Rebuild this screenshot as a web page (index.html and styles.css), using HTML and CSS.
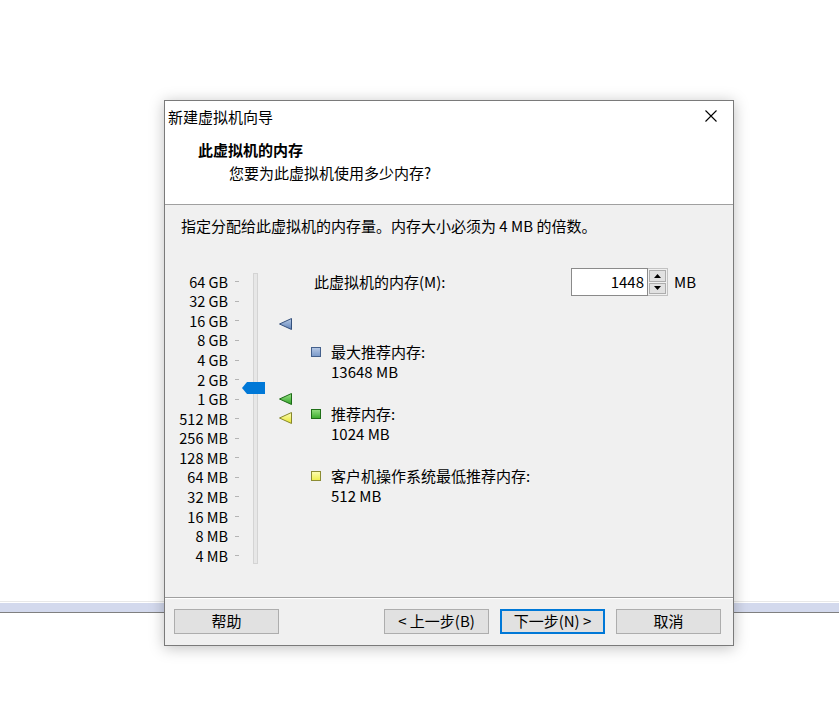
FILE: index.html
```html
<!DOCTYPE html>
<html>
<head>
  <title>新建虚拟机向导</title>
  <link rel="stylesheet" href="styles.css">
</head>
<body>
  <div class="wizard">
    <div class="titlebar">
      <span class="title">新建虚拟机向导</span>
      <svg class="close" width="12" height="12" viewBox="0 0 12 12">
        <path d="M0.5 0.5 L11.5 11.5 M11.5 0.5 L0.5 11.5" stroke="#000" stroke-width="1.1" fill="none"/>
      </svg>
    </div>

    <div class="header">
      <h1>此虚拟机的内存</h1>
      <p>您要为此虚拟机使用多少内存?</p>
    </div>

    <div class="content">
      <p class="hint">指定分配给此虚拟机的内存量。内存大小必须为 4 MB 的倍数。</p>

      <div class="main">
        <div class="scale">
          <div class="ticks">
            <div class="tick"><span>64 GB</span><i></i></div>
            <div class="tick"><span>32 GB</span><i></i></div>
            <div class="tick"><span>16 GB</span><i></i></div>
            <div class="tick"><span>8 GB</span><i></i></div>
            <div class="tick"><span>4 GB</span><i></i></div>
            <div class="tick"><span>2 GB</span><i></i></div>
            <div class="tick"><span>1 GB</span><i></i></div>
            <div class="tick"><span>512 MB</span><i></i></div>
            <div class="tick"><span>256 MB</span><i></i></div>
            <div class="tick"><span>128 MB</span><i></i></div>
            <div class="tick"><span>64 MB</span><i></i></div>
            <div class="tick"><span>32 MB</span><i></i></div>
            <div class="tick"><span>16 MB</span><i></i></div>
            <div class="tick"><span>8 MB</span><i></i></div>
            <div class="tick"><span>4 MB</span><i></i></div>
          </div>
          <div class="track"></div>

          <svg class="thumb" width="23" height="12" viewBox="0 0 23 12">
            <polygon points="0,6 5,0 23,0 23,12 5,12" fill="#0078d7"/>
          </svg>

          <svg class="marker max" width="13" height="12" viewBox="0 0 13 12">
            <defs>
              <linearGradient id="gb" x1="0" y1="0" x2="0" y2="1">
                <stop offset="0" stop-color="#b8cbe6"/>
                <stop offset="1" stop-color="#5f82b8"/>
              </linearGradient>
            </defs>
            <polygon points="0.5,6 12.5,0.5 12.5,11.5" fill="url(#gb)" stroke="#34507c" stroke-width="1"/>
          </svg>
          <svg class="marker rec" width="13" height="12" viewBox="0 0 13 12">
            <defs>
              <linearGradient id="gg" x1="0" y1="0" x2="0" y2="1">
                <stop offset="0" stop-color="#9be28a"/>
                <stop offset="1" stop-color="#2fa424"/>
              </linearGradient>
            </defs>
            <polygon points="0.5,6 12.5,0.5 12.5,11.5" fill="url(#gg)" stroke="#1c6a16" stroke-width="1"/>
          </svg>
          <svg class="marker min" width="13" height="12" viewBox="0 0 13 12">
            <defs>
              <linearGradient id="gy" x1="0" y1="0" x2="0" y2="1">
                <stop offset="0" stop-color="#fdfdb8"/>
                <stop offset="1" stop-color="#e6e62c"/>
              </linearGradient>
            </defs>
            <polygon points="0.5,6 12.5,0.5 12.5,11.5" fill="url(#gy)" stroke="#86862c" stroke-width="1"/>
          </svg>
        </div>

        <div class="info">
          <div class="memrow">
            <label class="memlabel">此虚拟机的内存(M):</label>
            <div class="spinbox">
              <div class="field">1448</div>
              <div class="spin">
                <div class="up"><svg width="7" height="4" viewBox="0 0 7 4"><polygon points="3.5,0 7,4 0,4" fill="#000"/></svg></div>
                <div class="down"><svg width="7" height="4" viewBox="0 0 7 4"><polygon points="0,0 7,0 3.5,4" fill="#000"/></svg></div>
              </div>
            </div>
            <span class="unit">MB</span>
          </div>

          <div class="legend">
            <div class="item">
              <span class="swatch blue"></span>
              <div>
                <div>最大推荐内存:</div>
                <div>13648 MB</div>
              </div>
            </div>
            <div class="item">
              <span class="swatch green"></span>
              <div>
                <div>推荐内存:</div>
                <div>1024 MB</div>
              </div>
            </div>
            <div class="item">
              <span class="swatch yellow"></span>
              <div>
                <div>客户机操作系统最低推荐内存:</div>
                <div>512 MB</div>
              </div>
            </div>
          </div>
        </div>
      </div>
    </div>

    <div class="footer">
      <button>帮助</button>
      <div class="nav">
        <button>&lt; 上一步(B)</button>
        <button class="default">下一步(N) &gt;</button>
        <button>取消</button>
      </div>
    </div>
  </div>
</body>
</html>
```

FILE: styles.css
```css
body {
    margin: 0;
    height: 707px;
    background-color: white;
    background-image:
        linear-gradient(#e8e8e8, #e8e8e8),
        linear-gradient(#d3d9ed, #d3d9ed),
        linear-gradient(#808080, #808080);
    background-size: 100% 1px, 100% 9px, 100% 1px;
    background-position: 0 601px, 0 603px, 0 612px;
    background-repeat: no-repeat;
    font-family: "Noto Sans CJK SC", "Liberation Sans", sans-serif;
    font-size: 15px;
    color: #000;
    padding-top: 100px;
    box-sizing: border-box;
}

.wizard {
    margin-left: 164px;
    width: 570px;
    height: 546px;
    box-sizing: border-box;
    border: 1px solid #7a7a7a;
    background-color: #f0f0f0;
    box-shadow: 0 2px 14px rgba(0, 0, 0, 0.25);
    display: flex;
    flex-direction: column;
}

.titlebar {
    height: 32px;
    flex-shrink: 0;
    background-color: white;
    display: flex;
    align-items: center;
    justify-content: space-between;
    padding: 0 16px 0 3px;
}

.title {
    line-height: 20px;
    padding-bottom: 1px;
}

.close {
    display: block;
    margin-bottom: 2px;
}

.header {
    height: 72px;
    flex-shrink: 0;
    box-sizing: border-box;
    background-color: white;
    border-bottom: 1px solid #a0a0a0;
    padding: 7px 0 0 33px;
}

.header h1 {
    margin: 0;
    font-size: 15px;
    font-weight: bold;
    line-height: 20px;
}

.header p {
    margin: 3px 0 0 31px;
    line-height: 20px;
}

.content {
    flex: 1;
    border-bottom: 1px solid #a0a0a0;
    box-shadow: 0 1px 0 #fff;
}

.hint {
    margin: 0;
    padding: 11px 0 0 16px;
    line-height: 20px;
}

.main {
    display: flex;
    margin-top: 32px;
}

.scale {
    position: relative;
    width: 146px;
    padding-top: 4px;
    display: flex;
}

.ticks {
    width: 88px;
    display: flex;
    flex-direction: column;
}

.tick {
    height: 19.57px;
    display: flex;
    align-items: center;
    justify-content: flex-end;
    padding-right: 14px;
    line-height: 19px;
    font-size: 14.5px;
}

.tick span {
    padding-bottom: 1px;
}

.tick i {
    display: block;
    width: 4px;
    height: 1px;
    margin-left: 7px;
    background-color: #b4b4b4;
}

.track {
    width: 3px;
    height: 289px;
    margin-top: 1px;
    background-color: #e7e7e7;
    border: 1px solid #d4d4d4;
}

.thumb {
    position: absolute;
    left: 77px;
    top: 114px;
}

.marker {
    position: absolute;
    left: 114px;
}

.marker.max { top: 50px; }
.marker.rec { top: 125px; }
.marker.min { top: 144px; }

.memrow {
    display: flex;
    align-items: center;
    height: 28px;
}

.memlabel {
    width: 257px;
    padding-left: 3px;
    line-height: 20px;
}

.spinbox {
    display: flex;
    height: 28px;
}

.field {
    width: 77px;
    box-sizing: border-box;
    border: 1px solid #8a8a8a;
    background-color: white;
    text-align: right;
    padding: 3px 3px 0 0;
    line-height: 20px;
}

.spin {
    width: 20px;
    box-sizing: border-box;
    border: 1px solid #c2c2c2;
    border-left: none;
    background-color: #f0f0f0;
    padding: 1px;
    display: flex;
    flex-direction: column;
    gap: 1px;
}

.spin div {
    flex: 1;
    border: 1px solid #adadad;
    background-color: #e1e1e1;
    display: flex;
    align-items: center;
    justify-content: center;
}

.spin svg {
    display: block;
}

.unit {
    margin-left: 6px;
    line-height: 20px;
}

.legend {
    margin-top: 46px;
    display: flex;
    flex-direction: column;
    gap: 23px;
}

.item {
    display: flex;
    line-height: 19.5px;
}

.swatch {
    width: 8px;
    height: 8px;
    margin: 5px 10px 0 0;
    border: 1px solid;
}

.swatch.blue {
    background: linear-gradient(#b3c6e3, #7c9bcb);
    border-color: #44608c;
}

.swatch.green {
    background: linear-gradient(#8fdc7c, #3fae30);
    border-color: #1f6f18;
}

.swatch.yellow {
    background: linear-gradient(#fdfdb0, #f0f050);
    border-color: #8c8c34;
}

.footer {
    height: 47px;
    flex-shrink: 0;
    box-sizing: border-box;
    padding: 11px 12px 0 9px;
    display: flex;
    justify-content: space-between;
    align-items: flex-start;
}

.nav {
    display: flex;
    gap: 11px;
}

button {
    width: 105px;
    height: 25px;
    box-sizing: border-box;
    border: 1px solid #adadad;
    background-color: #e1e1e1;
    font-family: "Noto Sans CJK SC", "Liberation Sans", sans-serif;
    font-size: 15px;
    color: #000;
    line-height: 20px;
    padding: 0 0 1px 0;
}

button.default {
    border: 2px solid #0078d7;
}
```
